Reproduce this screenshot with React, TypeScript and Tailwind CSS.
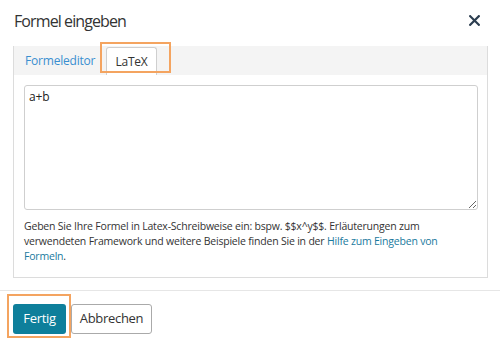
import React from "react";

const ff = { fontFamily: '"Open Sans", "Liberation Sans", sans-serif' };

export default function App() {
  return (
    <div className="relative w-[500px] h-[343px] bg-white overflow-hidden text-[#333]" style={ff}>
      {/* Header */}
      <div className="flex items-start justify-between pl-[14px] pr-[20px] pt-[9px] h-[46px]">
        <h1 className="text-[16px] leading-[24px] tracking-[-0.9px] text-[#333] font-normal">Formel eingeben</h1>
        <button className="mt-[5px] w-[12px] h-[12px] flex items-center justify-center" aria-label="Schließen">
          <svg width="11" height="11" viewBox="0 0 11 11">
            <path d="M1.2 1.2 L9.8 9.8 M9.8 1.2 L1.2 9.8" stroke="#2c3e50" strokeWidth="2.2" strokeLinecap="square" />
          </svg>
        </button>
      </div>

      {/* Tab panel */}
      <div className="mx-[13px] w-[475px] border border-t-0 border-[#dcdcdc]">
        <div className="flex items-end h-[29px] bg-[#f4f4f4] pl-[10px]">
          <div className="w-[71px] h-[28px] flex items-center px-[1px] text-[12px] tracking-[-0.2px] text-[#3a8fd0]">Formeleditor</div>
          <div className="ml-[11px] h-[28px] w-[51px] flex items-center justify-center bg-white border border-b-0 border-[#cfcfcf] rounded-t-[3px] text-[12px] tracking-[-0.2px] text-[#333]">
            LaTeX
          </div>
        </div>
        <div className="px-[10px] pt-[10px] pb-[13px]">
          <textarea
            defaultValue="a+b"
            className="block w-[454px] h-[125px] border border-[#cfcfcf] rounded-[3px] px-[4px] py-[3px] text-[12px] leading-[16px] tracking-[-0.2px] text-[#222] outline-none resize-y"
            style={ff}
          />
          <p className="mt-[9px] text-[10.5px] leading-[15px] tracking-[-0.2px] text-[#333]">
            Geben Sie Ihre Formel in Latex-Schreibweise ein: bspw. $$x^y$$. Erläuterungen zum
            <br />
            verwendeten Framework und weitere Beispiele finden Sie in der{" "}
            <a className="text-[#1a7a9e]">Hilfe zum Eingeben von</a>
            <br />
            <a className="text-[#1a7a9e]">Formeln</a>.
          </p>
        </div>
      </div>

      {/* Footer */}
      <div className="mt-[12px] border-t border-[#e6e6e6] pt-[13px] pl-[13px] flex gap-[5px]">
        <button className="h-[30px] w-[53px] rounded-[3px] bg-[#0e7f9b] text-white text-[13px] tracking-[-0.3px]">Fertig</button>
        <button className="h-[30px] w-[81px] rounded-[3px] bg-white border border-[#aaaaaa] text-[#333] text-[13px] tracking-[-0.3px]">Abbrechen</button>
      </div>

      {/* Annotation highlights */}
      <div className="absolute left-[100px] top-[42px] w-[71px] h-[31px] border-2 border-[#f4a460] pointer-events-none" />
      <div className="absolute left-[7px] top-[294px] w-[64px] h-[44px] border-2 border-[#f4a460] pointer-events-none" />
    </div>
  );
}
